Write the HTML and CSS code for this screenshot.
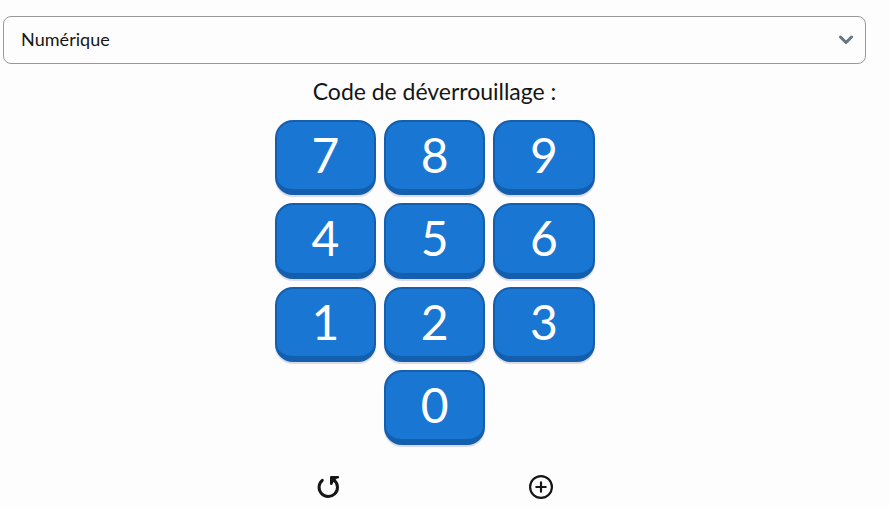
FILE: index.html
```html
<!DOCTYPE html>
<html lang="fr">
<head>
<meta charset="utf-8">
<title>Code de déverrouillage</title>
<link rel="stylesheet" href="styles.css">
</head>
<body>
<main class="panel">
  <div class="select" role="combobox" aria-expanded="false">
    <span class="select-label">Numérique</span>
    <svg class="chevron" width="16" height="10" viewBox="0 0 16 10"><path d="M2.500 2 8 7.500 13.500 2"/></svg>
  </div>
  <h1 class="title"><span>Code de déverrouillage :</span></h1>
  <div class="keypad">
    <button class="key">7</button><button class="key">8</button><button class="key">9</button>
    <button class="key">4</button><button class="key">5</button><button class="key">6</button>
    <button class="key">1</button><button class="key">2</button><button class="key">3</button>
    <button class="key zero">0</button>
  </div>
  <div class="actions">
    <button class="action" aria-label="Réinitialiser">
      <svg width="26" height="26" viewBox="0 0 26 26"><path class="arc" d="M7.300 6.300A9.200 9.200 0 1 0 19.800 6.800"/><path class="arrow" d="M16.300 9.700V3.200h6.500"/><path class="arrow-fill" d="M16 3h7l-6 7z"/></svg>
    </button>
    <button class="action" aria-label="Ajouter">
      <svg width="26" height="26" viewBox="0 0 26 26"><circle class="ring" cx="13" cy="13" r="10.900"/><path class="plus" d="M13 8.300v9.400M8.300 13h9.400"/></svg>
    </button>
  </div>
</main>
</body>
</html>
```

FILE: styles.css
```css
* { box-sizing: border-box; }
body {
  margin: 0;
  background: #fdfdfd;
  color: #161616;
  font-family: Lato, "Open Sans", sans-serif;
  overflow: hidden;
}
.panel {
  width: 863px;
  margin: 16px 0 0 3px;
}
.select {
  height: 48px;
  display: flex;
  align-items: center;
  justify-content: space-between;
  padding: 0 11px 0 17px;
  border: 1px solid #989898;
  border-radius: 8px;
}
.select-label { font-size: 18px; letter-spacing: 0.05px; padding-bottom: 2px; }
.chevron { fill: none; stroke: #6b7280; stroke-width: 3; stroke-linecap: round; stroke-linejoin: round; }
.title {
  margin: 11px 0 0;
  height: 32px;
  font-size: 23px;
  line-height: 32px;
  font-weight: 400;
  letter-spacing: -0.02px;
  text-align: center;
}
.keypad {
  display: grid;
  grid-template-columns: repeat(3, 101.300px);
  grid-auto-rows: 75.300px;
  gap: 8px;
  justify-content: center;
  margin-top: 13px;
  padding-left: 0.500px;
}
.key {
  padding: 0 0 2px;
  border: 2px solid #135fae;
  border-bottom-width: 6px;
  border-radius: 18px;
  background: #1976d2;
  box-shadow: 0 2px 1px #d9d8e3;
  color: #fff;
  font: 400 48px/65px Lato, sans-serif;
}
.zero { grid-column: 2; }
.actions {
  display: flex;
  justify-content: center;
  gap: 187px;
  margin-top: 29px;
}
.action { padding: 0; border: 0; background: none; width: 26px; height: 26px; color: #161616; }
.action svg { display: block; fill: none; stroke: currentColor; }
.arc { stroke-width: 3; stroke-linecap: round; }
.arrow { stroke-width: 2.600; stroke-linecap: round; stroke-linejoin: round; }
.action .arrow-fill { fill: currentColor; stroke: none; }
.ring { stroke-width: 2.200; }
.plus { stroke-width: 2.200; stroke-linecap: round; }
```
